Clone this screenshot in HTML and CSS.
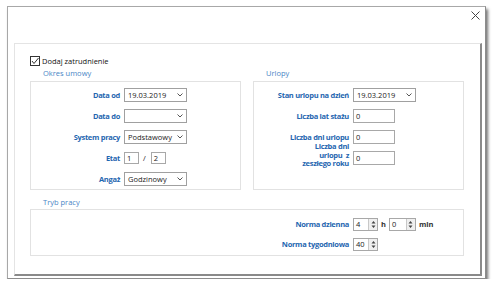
FILE: index.html
```html
<!DOCTYPE HTML>
<html lang="pl">
  <head>
    <title>Dodaj zatrudnienie</title>
    <meta charset="utf-8">
    <link rel="stylesheet" href="styles.css">
  </head>
  <body>

  <div class="dialog">
    <div class="titlebar">
      <svg class="close" width="9" height="9" viewBox="0 0 9 9"><path d="M0.5 0.5 L8.5 8.5 M8.5 0.5 L0.5 8.5" stroke="#444" stroke-width="1" fill="none"/></svg>
    </div>

    <div class="panel">
      <div class="check">
        <span class="check-box"><svg width="8" height="8" viewBox="0 0 8 8"><path d="M1 4 L3 6.5 L7.5 1" stroke="#333" stroke-width="1" fill="none"/></svg></span>
        Dodaj zatrudnienie
      </div>

      <div class="groups">
        <div class="group">
          <div class="group-title">Okres umowy</div>
          <div class="group-box form form-left">
            <span class="lbl">Data od</span>
            <div class="select">19.03.2019<svg class="chev" width="6" height="4" viewBox="0 0 6 4"><path d="M0.5 0.5 L3 3 L5.5 0.5" stroke="#555" fill="none"/></svg></div>

            <span class="lbl">Data do</span>
            <div class="select"><svg class="chev" width="6" height="4" viewBox="0 0 6 4"><path d="M0.5 0.5 L3 3 L5.5 0.5" stroke="#555" fill="none"/></svg></div>

            <span class="lbl">System pracy</span>
            <div class="select">Podstawowy<svg class="chev" width="6" height="4" viewBox="0 0 6 4"><path d="M0.5 0.5 L3 3 L5.5 0.5" stroke="#555" fill="none"/></svg></div>

            <span class="lbl">Etat</span>
            <div class="etat">
              <div class="input small">1</div>
              <span class="slash">/</span>
              <div class="input small">2</div>
            </div>

            <span class="lbl">Angaż</span>
            <div class="select">Godzinowy<svg class="chev" width="6" height="4" viewBox="0 0 6 4"><path d="M0.5 0.5 L3 3 L5.5 0.5" stroke="#555" fill="none"/></svg></div>
          </div>
        </div>

        <div class="group">
          <div class="group-title">Urlopy</div>
          <div class="group-box form form-right">
            <span class="lbl">Stan urlopu na dzień</span>
            <div class="select">19.03.2019<svg class="chev" width="6" height="4" viewBox="0 0 6 4"><path d="M0.5 0.5 L3 3 L5.5 0.5" stroke="#555" fill="none"/></svg></div>

            <span class="lbl">Liczba lat stażu</span>
            <div class="input wide">0</div>

            <span class="lbl">Liczba dni urlopu</span>
            <div class="input wide">0</div>

            <span class="lbl lbl-wrap">Liczba dni urlopu&nbsp; z zeszłego roku</span>
            <div class="input wide">0</div>
          </div>
        </div>
      </div>

      <div class="group tryb">
        <div class="group-title">Tryb pracy</div>
        <div class="group-box form form-tryb">
          <span class="lbl">Norma dzienna</span>
          <div class="inline">
            <div class="spin"><span class="spin-val">4</span><span class="spin-btn"><svg width="7" height="11" viewBox="0 0 7 11"><path d="M3.5 2 L5.5 4.5 L1.5 4.5 Z M1.5 6.5 L5.5 6.5 L3.5 9 Z" fill="#444"/></svg></span></div>
            <span class="unit">h</span>
            <div class="spin spin-b"><span class="spin-val">0</span><span class="spin-btn"><svg width="7" height="11" viewBox="0 0 7 11"><path d="M3.5 2 L5.5 4.5 L1.5 4.5 Z M1.5 6.5 L5.5 6.5 L3.5 9 Z" fill="#444"/></svg></span></div>
            <span class="unit">min</span>
          </div>

          <span class="lbl">Norma tygodniowa</span>
          <div class="inline">
            <div class="spin"><span class="spin-val">40</span><span class="spin-btn"><svg width="7" height="11" viewBox="0 0 7 11"><path d="M3.5 2 L5.5 4.5 L1.5 4.5 Z M1.5 6.5 L5.5 6.5 L3.5 9 Z" fill="#444"/></svg></span></div>
          </div>
        </div>
      </div>
    </div>
  </div>

  </body>
</html>
```

FILE: styles.css
```css
html {
  height: 100%;
}
body {
  margin: 0;
  padding: 0;
  background: #ffffff;
  color: #222;
  font-family: "Open Sans", sans-serif;
  font-size: 7.5px;
  line-height: 10px;
}
.dialog {
  box-sizing: border-box;
  width: 479px;
  height: 273px;
  margin: 6px 0 0 7px;
  border: 1px solid #a8a8a8;
  border-right-color: #8c8c8c;
  border-bottom-color: #8c8c8c;
  box-shadow: 2px 3px 3px rgba(0,0,0,0.55);
  display: flex;
  flex-direction: column;
}
.titlebar {
  height: 36px;
  display: flex;
  justify-content: flex-end;
  padding: 4px 5px 0 0;
  box-sizing: border-box;
}
.panel {
  flex: 1;
  margin: 0 3px 2px 6px;
  border-top: 1px solid #e4e4e4;
  border-left: 1px solid #e4e4e4;
  border-right: 2px solid #8a8a8a;
  border-bottom: 2px solid #8a8a8a;
  padding: 12px 16px 0 15px;
}
.check {
  display: flex;
  align-items: center;
  gap: 2px;
  height: 10px;
  color: #111;
}
.check-box {
  box-sizing: border-box;
  width: 10px;
  height: 10px;
  border: 1px solid #333;
  display: flex;
  align-items: center;
  justify-content: center;
}
.groups {
  display: grid;
  grid-template-columns: 211px 211px;
  column-gap: 12px;
}
.group {
  display: flex;
  flex-direction: column;
}
.group-title {
  color: #4a86c6;
  line-height: 12px;
  margin: 1px 0 2px 13px;
}
.tryb .group-title {
  margin-top: 6px;
  margin-bottom: 1px;
}
.group-box {
  flex: 1;
  border: 1px solid #e2e2e2;
}
.form {
  display: grid;
  grid-auto-rows: 21px;
  align-items: center;
  column-gap: 4px;
  padding-top: 2px;
}
.form-left {
  grid-template-columns: 89px auto;
}
.form-right {
  grid-template-columns: 95px auto;
}
.form-tryb {
  grid-template-columns: 318px auto;
  grid-auto-rows: 20px;
  padding: 4px 0 1px;
}
.lbl {
  color: #1f66b0;
  font-weight: bold;
  letter-spacing: -0.3px;
  text-align: right;
  white-space: nowrap;
}
.lbl-wrap {
  white-space: normal;
  justify-self: end;
  max-width: 50px;
  line-height: 8.5px;
  align-self: start;
  margin-top: -5px;
}
.select {
  box-sizing: border-box;
  width: 63px;
  height: 14px;
  border: 1px solid #a0a0a0;
  padding-left: 3px;
  display: flex;
  align-items: center;
  justify-content: space-between;
  line-height: 12px;
}
.chev {
  margin-left: auto;
  margin-right: 3px;
}
.input {
  box-sizing: border-box;
  height: 14px;
  border: 1px solid #a8a8a8;
  padding-left: 2px;
  line-height: 12px;
}
.input.small {
  width: 15px;
  height: 12px;
  line-height: 10px;
}
.input.wide {
  width: 42px;
}
.etat {
  display: flex;
  align-items: center;
}
.slash {
  margin: 0 5px 0 4px;
}
.inline {
  display: flex;
  align-items: center;
  gap: 3px;
}
.spin {
  box-sizing: border-box;
  width: 25px;
  height: 13px;
  border: 1px solid #a8a8a8;
  display: flex;
  line-height: 11px;
}
.spin-b {
  width: 27px;
}
.spin-val {
  flex: 1;
  padding-left: 2px;
}
.spin-btn {
  width: 8px;
  display: flex;
  align-items: center;
  justify-content: center;
  background: #efefef;
  border-left: 1px solid #c8c8c8;
}
.unit {
  font-weight: bold;
  color: #333;
}
```
